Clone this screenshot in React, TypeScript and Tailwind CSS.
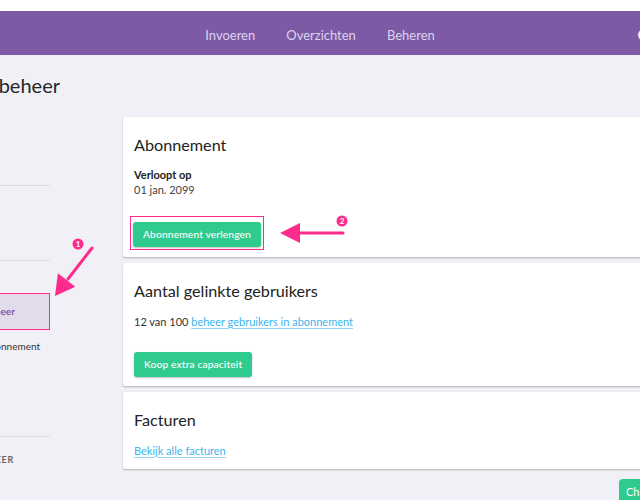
import React from "react";

const font = { fontFamily: "Lato, 'Open Sans', sans-serif" };

function Badge({ n, x, y }: { n: string; x: number; y: number }) {
  return (
    <g>
      <circle cx={x} cy={y} r={5.5} fill="#fe2b8c" />
      <text x={x} y={y + 3} textAnchor="middle" fontSize="8" fontWeight="700" fill="#ffffff" fontFamily="Lato, sans-serif">
        {n}
      </text>
    </g>
  );
}

function Arrows() {
  return (
    <svg className="absolute inset-0 pointer-events-none" width="640" height="500" viewBox="0 0 640 500">
      {/* arrow 1 */}
      <line x1="92" y1="248" x2="68" y2="279" stroke="#fe2b8c" strokeWidth="3" strokeLinecap="round" />
      <polygon points="55,296 57.9,273.3 75.3,286.7" fill="#fe2b8c" />
      <Badge n="1" x={78} y={244} />
      {/* arrow 2 */}
      <line x1="343" y1="233" x2="298" y2="233" stroke="#fe2b8c" strokeWidth="3" strokeLinecap="round" />
      <polygon points="280,233 300,223 300,243" fill="#fe2b8c" />
      <Badge n="2" x={342} y={221} />
    </svg>
  );
}

function Card({ h, children }: { h: string; children: React.ReactNode }) {
  return (
    <div className={`${h} bg-white rounded-[2px] shadow-[0_1px_2px_rgba(0,0,0,0.28)] pl-[11px] pt-[17px]`}>
      {children}
    </div>
  );
}

function GreenButton({ label }: { label: string }) {
  return (
    <button className="h-[25px] px-[10px] rounded-[3px] bg-[#2fca8d] text-white text-[10.3px] font-medium tracking-[0.1px] shadow-[0_1px_2px_rgba(0,0,0,0.25)]">
      {label}
    </button>
  );
}

export default function App() {
  return (
    <div className="relative w-[640px] h-[500px] overflow-hidden bg-[#f0f0f6] text-[#2e2e2e]" style={font}>
      <div className="h-[11px] bg-white" />
      <nav className="h-[44px] pt-[6px] bg-[#7c5aa6] flex items-center justify-center gap-[31px] text-[13px] text-[#ddd2ec] relative">
        <span>Invoeren</span>
        <span>Overzichten</span>
        <span>Beheren</span>
        <div className="absolute right-[-10px] top-[18px] w-[12px] h-[12px] rounded-full bg-white/90" />
      </nav>

      <div className="h-[55px] flex items-center">
        <div className="w-[60px] flex justify-end overflow-hidden mt-[4px]">
          <span className="text-[20px] leading-[26px] text-[#262626] whitespace-nowrap">Accountbeheer</span>
        </div>
      </div>

      <div className="flex mt-[7px]">
        {/* sidebar */}
        <div className="w-[50px] shrink-0 flex flex-col">
          <div className="h-[68px]" />
          <div className="h-px bg-[#dcdce3]" />
          <div className="h-[74px]" />
          <div className="h-px bg-[#dcdce3]" />
          <div className="h-[32px]" />
          <div className="h-[37px] border-[1.5px] border-[#fe2b8c] border-l-0 bg-[#e2dbec] flex items-center overflow-hidden">
            <span className="-ml-[17px] text-[10px] font-bold text-[#7c5aa6] whitespace-nowrap">Beheer</span>
          </div>
          <div className="h-[32px] flex items-center overflow-hidden">
            <span className="-ml-[17px] text-[10px] text-[#333] whitespace-nowrap">Abonnement</span>
          </div>
          <div className="h-[74px]" />
          <div className="h-px bg-[#dcdce3]" />
          <div className="h-[46px] flex items-center overflow-hidden">
            <span className="-ml-[24px] text-[9px] font-bold tracking-[0.6px] text-[#666] whitespace-nowrap">BEHEER</span>
          </div>
        </div>

        {/* cards */}
        <div className="ml-[73px] w-[560px] shrink-0 flex flex-col gap-[6px]">
          <Card h="h-[140px]">
            <h2 className="text-[16.2px] leading-[22px] text-[#222]">Abonnement</h2>
            <div className="mt-[11px] text-[11px] leading-[15px] font-bold text-[#222]">Verloopt op</div>
            <div className="text-[11px] leading-[15px] text-[#444]">01 jan. 2099</div>
            <div className="mt-[19px] -ml-[4.5px] inline-block border-[1.5px] border-[#fe2b8c] p-[2.5px]">
              <GreenButton label="Abonnement verlengen" />
            </div>
          </Card>
          <Card h="h-[123px]">
            <h2 className="text-[16.2px] leading-[22px] text-[#222]">Aantal gelinkte gebruikers</h2>
            <div className="mt-[11.5px] text-[11px] leading-[15px] text-[#333]">
              12 van 100{" "}
              <a className="text-[#3cb4ee] underline decoration-[#8fd3f7] underline-offset-2">beheer gebruikers in abonnement</a>
            </div>
            <div className="mt-[21.5px]">
              <GreenButton label="Koop extra capaciteit" />
            </div>
          </Card>
          <Card h="h-[77px]">
            <h2 className="text-[16.2px] leading-[22px] text-[#222]">Facturen</h2>
            <div className="mt-[11.5px] text-[11px] leading-[15px]">
              <a className="text-[#3cb4ee] underline decoration-[#8fd3f7] underline-offset-2">Bekijk alle facturen</a>
            </div>
          </Card>
          <div className="flex mt-[4px]">
            <button className="ml-[496px] h-[26px] px-[7px] rounded-[4px] bg-[#2fca8d] text-white text-[11px] whitespace-nowrap">
              Chat met ons
            </button>
          </div>
        </div>
      </div>

      <Arrows />
    </div>
  );
}
